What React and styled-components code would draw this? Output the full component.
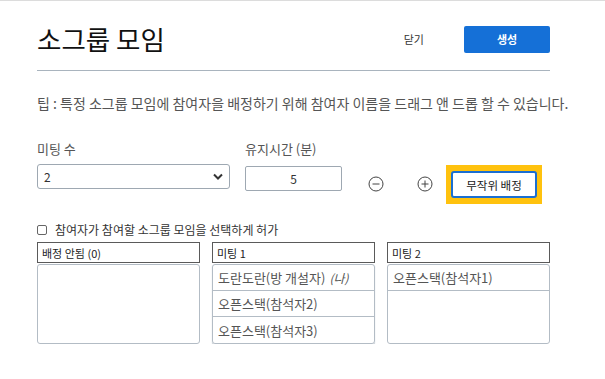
import React from "react";
import styled, { createGlobalStyle } from "styled-components";

const GlobalStyle = createGlobalStyle`
  * {
    box-sizing: border-box;
    margin: 0;
    padding: 0;
  }
  body {
    background: #fff;
    font-family: "Noto Sans CJK KR", "Noto Sans", sans-serif;
    border-top: 1px solid #dcdcdc;
  }
`;

const Page = styled.div`
  width: 605px;
  padding: 0 55px 0 37px;
`;

const Header = styled.div`
  display: flex;
  align-items: center;
  padding: 24px 0 17px;
  border-bottom: 1px solid #a9b4be;
`;

const Title = styled.h1`
  flex: 1;
  font-size: 26.5px;
  font-weight: 400;
  color: #111;
  line-height: 28px;
`;

const CloseButton = styled.button`
  border: none;
  background: none;
  font-family: inherit;
  font-size: 11px;
  color: #333;
  margin-right: 40px;
`;

const CreateButton = styled.button`
  width: 86px;
  height: 27px;
  border: none;
  border-radius: 2px;
  background: #1570d7;
  color: #fff;
  font-family: inherit;
  font-size: 11px;
  font-weight: 700;
`;

const Tip = styled.p`
  margin-top: 24px;
  font-size: 14px;
  line-height: 17px;
  color: #555;
  white-space: nowrap;
`;

const Controls = styled.div`
  display: grid;
  grid-template-columns: 193px 97px auto;
  grid-template-rows: 16px 39px;
  column-gap: 15px;
  row-gap: 7px;
  margin-top: 29px;
  align-items: center;
`;

const Label = styled.span`
  font-size: 13px;
  color: #555;
  line-height: 16px;
`;

const Select = styled.div`
  display: flex;
  align-items: center;
  justify-content: space-between;
  height: 25px;
  padding: 0 6px;
  border: 1px solid #9ea8b2;
  border-radius: 3px;
  font-size: 12px;
  color: #333;
  align-self: start;
`;

const NumberBox = styled.div`
  display: flex;
  align-items: center;
  justify-content: center;
  height: 25px;
  border: 1px solid #9ea8b2;
  border-radius: 2px;
  font-size: 12px;
  color: #333;
  align-self: start;
  margin-top: 2px;
`;

const Tools = styled.div`
  display: flex;
  align-items: center;
`;

const IconButton = styled.span`
  display: flex;
  margin: ${(p) => p.$margin};
`;

const FocusRing = styled.div`
  padding: 6px 5px;
  background: #ffc20e;
  margin: 2px 0 0 13px;
`;

const RandomButton = styled.button`
  display: block;
  width: 86px;
  height: 27px;
  border: 2px solid #1a6fd3;
  border-radius: 3px;
  background: #fff;
  font-family: inherit;
  font-size: 11.5px;
  color: #222;
`;

const CheckRow = styled.label`
  display: flex;
  align-items: center;
  gap: 8px;
  margin-top: 20px;
  font-size: 12px;
  color: #333;
  line-height: 14px;
`;

const Box = styled.span`
  width: 10px;
  height: 10px;
  border: 1px solid #666;
  border-radius: 2px;
`;

const Columns = styled.div`
  display: grid;
  grid-template-columns: repeat(3, 1fr);
  column-gap: 12px;
  margin-top: 5px;
`;

const ColHead = styled.div`
  height: 21px;
  display: flex;
  align-items: center;
  padding-left: 4px;
  border: 1px solid #5a5a5a;
  font-size: 11px;
  color: #222;
`;

const ColBody = styled.div`
  height: 80px;
  margin-top: 1px;
  border: 1px solid #b3bcc5;
  border-radius: 3px;
  overflow: hidden;
  box-shadow: ${(p) => (p.$full ? "0 1px 1px #b3bcc5" : "none")};
`;

const Item = styled.div`
  height: 26px;
  display: flex;
  align-items: center;
  padding-left: 5px;
  border-bottom: ${(p) => (p.$last ? "none" : "1px solid #b3bcc5")};
  font-size: 13px;
  color: #555;
  white-space: nowrap;
`;

const Me = styled.i`
  margin-left: 4px;
  font-size: 12px;
`;

const Circle = ({ plus }) => (
  <svg width="16" height="16" viewBox="0 0 16 16" fill="none" stroke="#444" strokeWidth="1">
    <circle cx="8" cy="8" r="7" />
    <line x1="4.5" y1="8" x2="11.5" y2="8" />
    {plus && <line x1="8" y1="4.5" x2="8" y2="11.5" />}
  </svg>
);

const Chevron = () => (
  <svg width="10" height="7" viewBox="0 0 10 7" fill="none" stroke="#333" strokeWidth="2">
    <polyline points="1,1.5 5,5.5 9,1.5" />
  </svg>
);

const meetings = [
  { title: "배정 안됨 (0)", people: [] },
  {
    title: "미팅 1",
    people: [
      <>도란도란(방 개설자)<Me>(나)</Me></>,
      "오픈스택(참석자2)",
      "오픈스택(참석자3)",
    ],
  },
  { title: "미팅 2", people: ["오픈스택(참석자1)"] },
];

export default function App() {
  return (
    <Page>
      <GlobalStyle />
      <Header>
        <Title>소그룹 모임</Title>
        <CloseButton>닫기</CloseButton>
        <CreateButton>생성</CreateButton>
      </Header>
      <Tip>팁 : 특정 소그룹 모임에 참여자을 배정하기 위해 참여자 이름을 드래그 앤 드롭 할 수 있습니다.</Tip>
      <Controls>
        <Label>미팅 수</Label>
        <Label>유지시간 (분)</Label>
        <span />
        <Select>
          2
          <Chevron />
        </Select>
        <NumberBox>5</NumberBox>
        <Tools>
          <IconButton $margin="0 0 0 11px">
            <Circle />
          </IconButton>
          <IconButton $margin="0 0 0 33px">
            <Circle plus />
          </IconButton>
          <FocusRing>
            <RandomButton>무작위 배정</RandomButton>
          </FocusRing>
        </Tools>
      </Controls>
      <CheckRow>
        <Box />
        참여자가 참여할 소그룹 모임을 선택하게 허가
      </CheckRow>
      <Columns>
        {meetings.map((m, i) => (
          <div key={i}>
            <ColHead>{m.title}</ColHead>
            <ColBody $full={m.people.length === 3}>
              {m.people.map((p, j) => (
                <Item key={j} $last={j === 2}>
                  {p}
                </Item>
              ))}
            </ColBody>
          </div>
        ))}
      </Columns>
    </Page>
  );
}
